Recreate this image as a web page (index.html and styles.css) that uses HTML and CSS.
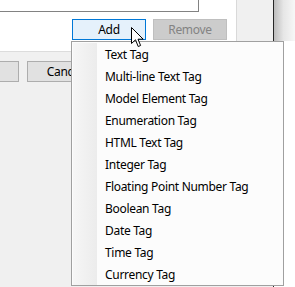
FILE: index.html
```html
<!DOCTYPE html>
<html>
<head>
<meta charset="utf-8">
<link rel="stylesheet" href="styles.css">
</head>
<body>
<div class="screen">
  <div class="window">
    <div class="upper">
      <div class="panel">
        <div class="listbox"></div>
        <div class="actions">
          <button class="btn btn-focus">Add</button>
          <button class="btn btn-disabled">Remove</button>
        </div>
      </div>
      <div class="side"></div>
    </div>
    <div class="footer">
      <button class="btn btn-dialog btn-first" aria-label="OK"></button>
      <button class="btn btn-dialog">Cancel</button>
    </div>
  </div>
  <div class="shadow"></div>

  <ul class="menu">
    <li class="menu-item">Text Tag</li>
    <li class="menu-item">Multi-line Text Tag</li>
    <li class="menu-item">Model Element Tag</li>
    <li class="menu-item">Enumeration Tag</li>
    <li class="menu-item">HTML Text Tag</li>
    <li class="menu-item">Integer Tag</li>
    <li class="menu-item">Floating Point Number Tag</li>
    <li class="menu-item">Boolean Tag</li>
    <li class="menu-item">Date Tag</li>
    <li class="menu-item">Time Tag</li>
    <li class="menu-item">Currency Tag</li>
  </ul>

  <svg class="cursor" width="13" height="21" viewBox="0 0 13 21">
    <polygon points="0.5,0.5 0.5,16.5 4.5,12.8 7.2,19.5 9.6,18.5 7,12.2 12.2,12.2" fill="#ffffff" stroke="#000000" stroke-width="1" stroke-linejoin="miter"/>
  </svg>
</div>
</body>
</html>
```

FILE: styles.css
```css
html, body {
  margin: 0;
  padding: 0;
  background: #ffffff;
}

.screen {
  position: relative;
  width: 295px;
  height: 287px;
  overflow: hidden;
  display: flex;
  background: #ffffff;
  font-family: "Noto Sans", "Open Sans", sans-serif;
  font-size: 12px;
  letter-spacing: -0.3px;
  color: #000000;
}

.window {
  width: 274px;
  height: 287px;
  box-sizing: border-box;
  border-right: 1px solid #262626;
  display: flex;
  flex-direction: column;
}

.upper {
  display: flex;
  height: 52px;
}

.panel {
  width: 237px;
  box-sizing: border-box;
  background: #ffffff;
  border-right: 1px solid #d9d9d9;
  border-bottom: 1px solid #dcdcdc;
}

.side {
  flex: 1;
  background: #f0f0f0;
}

.listbox {
  width: 199px;
  height: 12px;
  box-sizing: border-box;
  border-right: 1px solid #828282;
  border-bottom: 1px solid #828282;
  background: #ffffff;
}

.actions {
  display: flex;
  justify-content: flex-end;
  gap: 7px;
  margin-top: 7px;
  padding-right: 9px;
}

.btn {
  width: 74px;
  height: 21px;
  box-sizing: border-box;
  margin: 0;
  padding: 0;
  border: 1px solid #adadad;
  background: #e1e1e1;
  font-family: inherit;
  font-size: 12px;
  letter-spacing: -0.3px;
  color: #000000;
  line-height: 18px;
  text-align: center;
}

.btn-focus {
  border-color: #0078d7;
  background: #e5f1fb;
}

.btn-disabled {
  border-color: #bfbfbf;
  background: #cccccc;
  color: #838383;
}

.footer {
  flex: 1;
  background: #f0f0f0;
  display: flex;
  align-items: flex-start;
  gap: 8px;
  padding-top: 9px;
}

.btn-dialog {
  width: 75px;
  flex: none;
}

.btn-first {
  margin-left: -56px;
}

.shadow {
  width: 21px;
  height: 41px;
  background: linear-gradient(to right, #bdbdbd, #e6e6e6 45%, #f7f7f7);
}

.menu {
  position: absolute;
  left: 71px;
  top: 41px;
  width: 213px;
  box-sizing: border-box;
  margin: 0;
  padding: 1px 1px 0;
  list-style: none;
  border: 1px solid #a0a0a0;
  background-color: #fcfcfc;
}

.menu-item {
  height: 22px;
  line-height: 24px;
  padding-left: 32px;
  white-space: nowrap;
  background: linear-gradient(to right, #f6f6f6, #ececec) no-repeat 0 0 / 24px 100%;
}

.cursor {
  position: absolute;
  left: 131px;
  top: 27px;
}
```
